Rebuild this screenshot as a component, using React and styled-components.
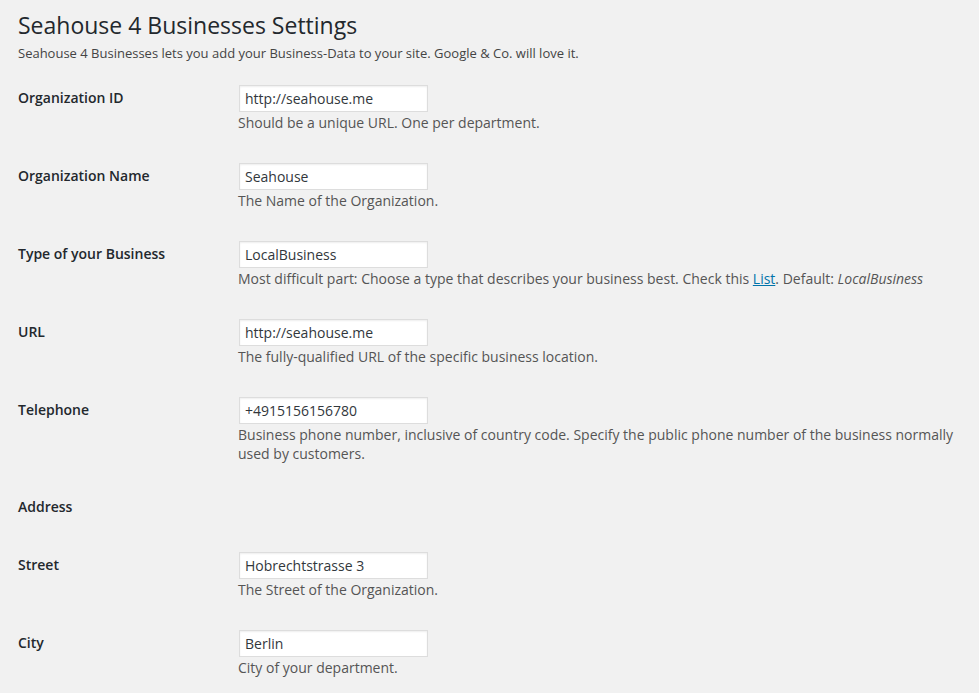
import React from 'react';
import styled, {createGlobalStyle} from 'styled-components';

const GlobalStyle = createGlobalStyle`
    html, body {
        margin: 0;
        padding: 0;
        background: #f1f1f1;
    }
    body {
        font-family: "Open Sans", "Liberation Sans", sans-serif;
        font-size: 13px;
        color: #444;
    }
`

const Wrap = styled.div`
    padding: 0 10px 0 18px;
`

const Title = styled.h1`
    font-size: 23px;
    font-weight: 400;
    line-height: 30px;
    color: #23282d;
    margin: 0;
    padding: 10px 0 0;
`

const Intro = styled.p`
    font-size: 13px;
    line-height: 18px;
    margin: 4px 0 0;
`

const FormTable = styled.table`
    width: 100%;
    border-collapse: collapse;
    margin-top: 7px;
`

const Label = styled.th`
    width: 200px;
    padding: 20px 10px 20px 0;
    text-align: left;
    vertical-align: top;
    font-size: 14px;
    font-weight: 600;
    line-height: 18px;
    color: #23282d;
`

const Field = styled.td`
    padding: 15px 10px;
    vertical-align: top;
`

const TextInput = styled.input`
    box-sizing: border-box;
    display: block;
    width: 189px;
    height: 27px;
    margin: 1px 1px 0;
    padding: 3px 5px;
    border: 1px solid #ddd;
    box-shadow: inset 0 1px 2px rgba(0,0,0,0.07);
    background: #fff;
    font-family: inherit;
    font-size: 14px;
    color: #32373c;
    outline: none;
`

const Description = styled.p`
    margin: 1px 0 0;
    font-size: 14px;
    line-height: 19px;
    color: #555;
    a {
        color: #0073aa;
        text-decoration: underline;
    }
`

const fields = [
    {label: 'Organization ID', value: 'http://seahouse.me', desc: 'Should be a unique URL. One per department.'},
    {label: 'Organization Name', value: 'Seahouse', desc: 'The Name of the Organization.'},
    {
        label: 'Type of your Business',
        value: 'LocalBusiness',
        desc: <>Most difficult part: Choose a type that describes your business best. Check this <a href="#">List</a>. Default: <em>LocalBusiness</em></>
    },
    {label: 'URL', value: 'http://seahouse.me', desc: 'The fully-qualified URL of the specific business location.'},
    {
        label: 'Telephone',
        value: '+4915156156780',
        desc: 'Business phone number, inclusive of country code. Specify the public phone number of the business normally used by customers.'
    },
    {label: 'Address', heading: true},
    {label: 'Street', value: 'Hobrechtstrasse 3', desc: 'The Street of the Organization.'},
    {label: 'City', value: 'Berlin', desc: 'City of your department.'},
]

export default function App() {
    return (
        <Wrap>
            <GlobalStyle />
            <Title>Seahouse 4 Businesses Settings</Title>
            <Intro>Seahouse 4 Businesses lets you add your Business-Data to your site. Google &amp; Co. will love it.</Intro>
            <FormTable>
                <tbody>
                    {fields.map(f => (
                        <tr key={f.label}>
                            <Label scope="row">{f.label}</Label>
                            <Field>
                                {!f.heading && (
                                    <>
                                        <TextInput type="text" defaultValue={f.value} />
                                        <Description>{f.desc}</Description>
                                    </>
                                )}
                            </Field>
                        </tr>
                    ))}
                </tbody>
            </FormTable>
        </Wrap>
    )
}
